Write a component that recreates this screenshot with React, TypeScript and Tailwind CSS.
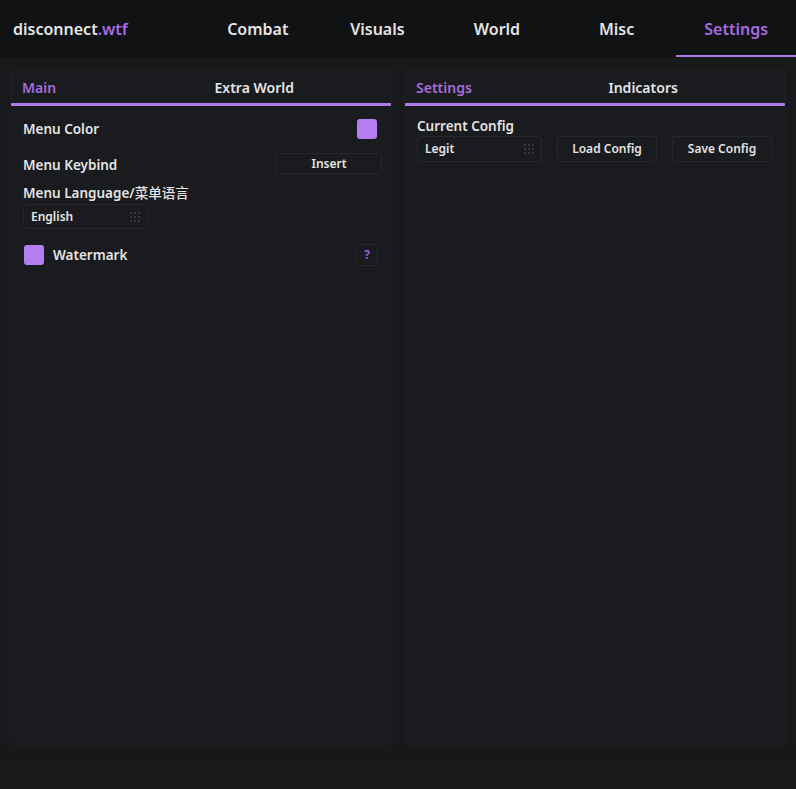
import React from "react";

const font = { fontFamily: '"Noto Sans", "Noto Sans CJK SC", sans-serif' };

function Grip() {
  return (
    <div className="grid grid-cols-3 gap-[2px]">
      {Array.from({ length: 9 }).map((_, i) => (
        <div key={i} className="w-[2px] h-[2px] bg-[#36373b]" />
      ))}
    </div>
  );
}

function SubTabs({ a, b }: { a: string; b: string }) {
  return (
    <div className="flex flex-col">
      <div className="flex gap-[3px] h-[32px]">
        <div className="flex-1 flex items-center pl-[10px] text-[14px] font-semibold text-[#a46cdd] border-t border-l border-r border-[#1c1d20] rounded-t-[3px]">
          {a}
        </div>
        <div className="flex-1 flex items-center pl-[12px] text-[14px] font-semibold text-[#e4e4e4] border-t border-l border-r border-[#1c1d20] rounded-t-[3px]">
          {b}
        </div>
      </div>
      <div className="h-[3px] bg-[#b07ce9] rounded-[1px]" />
    </div>
  );
}

export default function App() {
  const tabs = ["Combat", "Visuals", "World", "Misc", "Settings"];
  return (
    <div style={font} className="w-[796px] h-[789px] bg-[#18191b] flex flex-col overflow-hidden">
      <div className="h-[57px] bg-[#111214] flex">
        <div className="w-[198px] flex items-center pl-[13px] text-[16px] font-semibold text-[#e6e6e6]">
          disconnect<span className="text-[#a56be0]">.wtf</span>
        </div>
        {tabs.map((t) => (
          <div
            key={t}
            className={
              "flex-1 flex items-center justify-center text-[16px] font-semibold relative " +
              (t === "Settings" ? "text-[#a56be0]" : "text-[#e4e4e4]")
            }
          >
            {t}
            {t === "Settings" && (
              <div className="absolute left-0 right-0 bottom-0 h-[2px] bg-[#a97be3]" />
            )}
          </div>
        ))}
      </div>
      <div className="flex gap-[12px] px-[10px] pt-[13px] h-[688px]">
        <div className="flex-1 bg-[#1a1b1e] border border-[#1d1e21] rounded-[4px] flex flex-col">
          <SubTabs a="Main" b="Extra World" />
          <div className="flex flex-col px-[12px] text-[13.5px] font-semibold text-[#e4e4e4]">
            <div className="flex items-center justify-between h-[20px] mt-[13px] pr-[2px]">
              <span>Menu Color</span>
              <div className="w-[20px] h-[20px] rounded-[3px] bg-[#b47ef0]" />
            </div>
            <div className="flex items-center justify-between h-[21px] mt-[14px]">
              <span className="mt-[4px]">Menu Keybind</span>
              <div className="w-[106px] h-[21px] -mr-[3px] flex items-center justify-center border border-[#26272a] rounded-[3px] bg-[#1a1b1e] text-[12px]">
                Insert
              </div>
            </div>
            <div className="mt-[9px] h-[20px] flex items-center">
              Menu Language/<span className="font-medium">菜单语言</span>
            </div>
            <div className="mt-[1px] w-[125px] h-[25px] flex items-center justify-between px-[7px] border border-[#26272a] rounded-[3px] text-[12px]">
              <span>English</span>
              <Grip />
            </div>
            <div className="flex items-center justify-between mt-[15px] h-[22px]">
              <div className="flex items-center gap-[9px]">
                <div className="w-[20px] h-[20px] rounded-[3px] bg-[#b47ef0] ml-[1px]" />
                <span>Watermark</span>
              </div>
              <div className="w-[22px] h-[22px] mr-[1px] flex items-center justify-center border border-[#26272a] rounded-[3px] text-[12px] font-bold text-[#9a5fd6]">
                ?
              </div>
            </div>
          </div>
        </div>
        <div className="flex-1 bg-[#1a1b1e] border border-[#1d1e21] rounded-[4px] flex flex-col">
          <SubTabs a="Settings" b="Indicators" />
          <div className="flex flex-col px-[12px] text-[13.5px] font-semibold text-[#e4e4e4]">
            <div className="mt-[10px] h-[20px] flex items-center">Current Config</div>
            <div className="flex items-center gap-[15px] text-[12px]">
              <div className="w-[125px] h-[26px] flex items-center justify-between px-[7px] border border-[#26272a] rounded-[3px]">
                <span>Legit</span>
                <Grip />
              </div>
              <div className="w-[100px] h-[26px] flex items-center justify-center border border-[#26272a] rounded-[3px]">
                Load Config
              </div>
              <div className="w-[100px] h-[26px] flex items-center justify-center border border-[#26272a] rounded-[3px]">
                Save Config
              </div>
            </div>
          </div>
        </div>
      </div>
      <div className="h-[13px] bg-[#17181a]" />
    </div>
  );
}
